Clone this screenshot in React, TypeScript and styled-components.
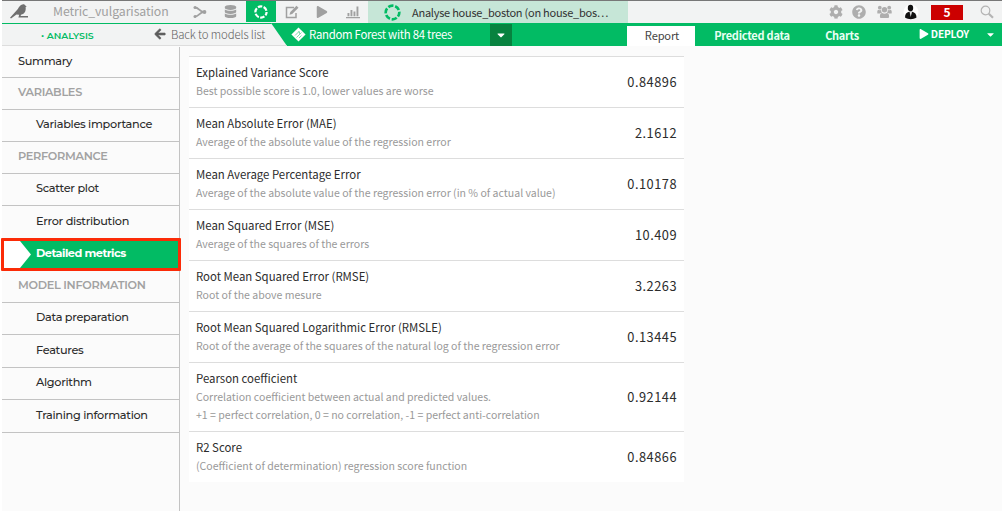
import React from "react";
import styled, { createGlobalStyle, css } from "styled-components";
import { FaArrowLeft, FaCaretDown, FaCog, FaDatabase, FaPlay, FaQuestionCircle } from "react-icons/fa";

const green = "#02bb64";
const sans = '"Source Sans Pro", "Noto Sans CJK SC", sans-serif';
const geometric = 'Montserrat, Inter, sans-serif';

const GlobalStyle = createGlobalStyle`
  * { box-sizing: border-box; }
  body { margin: 0; background: #fff; font-family: ${sans}; overflow: hidden; }
  svg { display: block; flex: none; }
`;

const Page = styled.div`
  display: flex;
  flex-direction: column;
  width: 1002px;
  height: 511px;
  padding-left: 2px;
  background: #fff;
`;

const TopBar = styled.header`
  display: flex;
  height: 23px;
  flex: none;
  border-top: 1px solid #777;
  background: #f2f3f3;
  color: #a0a0a0;
`;

const Slot = styled.div<{ $w: number; $bg?: string }>`
  display: flex;
  align-items: center;
  justify-content: center;
  flex: none;
  width: ${(p) => p.$w}px;
  height: 21px;
  background: ${(p) => p.$bg ?? "transparent"};
`;

const Label = styled.span<{ $size: number; $spacing?: number; $color?: string; $weight?: number; $line?: number }>`
  display: block;
  font-size: ${(p) => p.$size}px;
  letter-spacing: ${(p) => p.$spacing ?? 0}px;
  color: ${(p) => p.$color ?? "inherit"};
  font-weight: ${(p) => p.$weight ?? 400};
  line-height: ${(p) => p.$line ?? 20}px;
  white-space: nowrap;
`;

const ProjectName = styled.div`
  width: 149px;
  padding-left: 17px;
  flex: none;
`;

const OpenTab = styled.div`
  display: flex;
  align-items: center;
  gap: 11px;
  width: 260px;
  height: 22px;
  flex: none;
  padding-left: 16px;
  background: #c6e6d7;
  color: #333;
`;

const Tools = styled.div`
  display: flex;
  align-items: center;
  margin: 0 7px 0 auto;
  height: 21px;
  color: #aeaeae;
`;

const Alerts = styled.div`
  width: 32px;
  height: 15px;
  margin: 2px 16px 0 6px;
  background: #cc0000;
  color: #fff;
  text-align: center;
  font-size: 12px;
  font-weight: 700;
  line-height: 14px;
`;

const SubBar = styled.nav`
  display: flex;
  height: 23px;
  flex: none;
  background: ${green};
  color: #fff;
`;

const Crumbs = styled.div`
  display: flex;
  width: 285px;
  height: 23px;
  flex: none;
  border-top: 1px solid ${green};
  border-bottom: 1px solid #ddd;
  background: #f2f3f3;
  clip-path: polygon(0 0, 269px 0, 285px 100%, 0 100%);
`;

const Section = styled.div`
  width: 152px;
  padding-left: 39px;
  font-family: ${geometric};
  color: ${green};
`;

const BackLink = styled.a`
  display: flex;
  gap: 5px;
  color: #5c5c5c;
  svg { margin-top: 4px; stroke: #666; stroke-width: 30px; }
`;

const ModelName = styled.div`
  display: flex;
  width: 203px;
  flex: none;
  padding-left: 4px;
  gap: 3px;
  svg { margin-top: 4px; }
`;

const ModelMenu = styled.button`
  display: flex;
  align-items: center;
  justify-content: center;
  width: 22px;
  height: 22px;
  margin: 1px 115px 0 0;
  flex: none;
  padding: 0;
  border: 0;
  background: #07823f;
  color: #fff;
`;

const Tab = styled.a<{ $w: number; $active?: boolean }>`
  width: ${(p) => p.$w}px;
  height: 20px;
  margin-top: 3px;
  flex: none;
  text-align: center;
  color: #e8fff3;
  ${(p) => p.$active && css`
    padding-left: 2px;
    background: #fff;
    color: #444;
  `}
`;

const Deploy = styled.div`
  display: flex;
  align-items: center;
  gap: 2px;
  height: 22px;
  margin: 0 6px 0 auto;
  svg:last-child { margin-left: 14px; }
`;

const Main = styled.main`
  display: flex;
  flex: 1;
  background: #fbfbfb;
`;

const Sidebar = styled.aside`
  display: flex;
  flex-direction: column;
  width: 178px;
  flex: none;
  margin-top: 1px;
  border-right: 1px solid #c3c3c3;
  font-family: ${geometric};
`;

const Item = styled.div<{ $h: number; $kind: "top" | "head" | "sub" }>`
  height: ${(p) => p.$h}px;
  flex: none;
  padding-left: ${(p) => (p.$kind === "sub" ? 34 : 16)}px;
  border-bottom: 1px solid #c3c3c3;
  line-height: ${(p) => (p.$h === 33 ? 31 : 29)}px;
  font-size: 11.3px;
  letter-spacing: -0.3px;
  font-weight: ${(p) => (p.$kind === "head" ? 600 : 500)};
  color: ${(p) => (p.$kind === "head" ? "#a2a2a2" : "#2c2c2c")};
  white-space: nowrap;
`;

const ActiveItem = styled.div`
  position: relative;
  height: 33px;
  width: 180px;
  flex: none;
  margin: -1px 0 0 -1px;
  padding-left: 32px;
  border: 3px solid #fb2b07;
  border-radius: 1px;
  background: ${green};
  color: #fff;
  font-size: 11.3px;
  letter-spacing: -0.52px;
  font-weight: 700;
  line-height: 25px;
  white-space: nowrap;
  &::before {
    content: "";
    position: absolute;
    left: 0;
    top: 0;
    width: 27px;
    height: 27px;
    background: #fff;
    clip-path: polygon(0 0, 16px 0, 27px 50%, 16px 100%, 0 100%);
  }
`;

const Metrics = styled.section`
  width: 495px;
  margin: 10px 0 0 9px;
`;

const Metric = styled.div`
  display: flex;
  align-items: center;
  justify-content: space-between;
  padding: 6px 7px 7px 7px;
  border-top: 1px solid #ddd;
  background: #fff;
`;

const MetricText = styled.div`
  display: flex;
  flex-direction: column;
`;

const MetricName = styled.div`
  margin-bottom: 1px;
`;

const MetricValue = styled.div`
  margin-top: 1px;
`;

const Ring = ({ size, color }: { size: number; color: string }) => (
  <svg width={size} height={size} viewBox="0 0 16 16" fill="none" stroke={color} strokeWidth="2.5">
    <circle cx="8" cy="8" r="6.4" strokeDasharray="5.1 1.6" strokeDashoffset="1" />
  </svg>
);

const Bird = () => (
  <svg width="19" height="16" viewBox="0 0 19 16" fill="#6f6f6f">
    <path d="M0 13.800 7.200 5.800C8.600 4 9.600 1 12.600.4c1.500-.2 2.500.4 2.900 1.300l1.300.7-1.200.7c.6 3.600-.6 6.900-4.600 7.700l-.4 1.300h7.400v1.300H8.400l.8-2.600-2.700-.2L1 14.600Z" />
  </svg>
);

const Flow = () => (
  <svg width="14" height="14" viewBox="0 0 14 14" fill="none" stroke="#a0a0a0" strokeWidth="1.8">
    <path d="M2 2.500c4 0 4.500 4.500 9 4.500M2 11.500C6 11.500 6.500 7 11 7" />
    <g fill="#a0a0a0" stroke="none"><circle cx="2" cy="2.500" r="1.500" /><circle cx="2" cy="11.500" r="1.500" /><circle cx="11.500" cy="7" r="1.900" /></g>
  </svg>
);

const Edit = () => (
  <svg width="14" height="14" viewBox="0 0 14 14" fill="none" stroke="#a0a0a0" strokeWidth="1.5">
    <path d="M9 2.500H1.500v10h9.500V8" />
    <path d="M4.500 9.800 5.300 7 11.500.8l2 2L7.200 9Z" fill="#a0a0a0" stroke="none" />
  </svg>
);

const Bars = () => (
  <svg width="14" height="14" viewBox="0 0 14 14" fill="#a0a0a0">
    <path d="M0 12h14v1.300H0zM1.500 8h1.900v3.200H1.500zM4.500 5h1.900v6.200H4.500zM7.500 6.500h1.900v4.700H7.500zM10.500 1.500h1.900v9.700h-1.900z" />
  </svg>
);

const People = () => (
  <svg width="15" height="14" viewBox="0 0 15 14" fill="#aeaeae">
    <circle cx="2.800" cy="2.700" r="1.900" />
    <circle cx="12.200" cy="2.700" r="1.900" />
    <circle cx="7.500" cy="4.800" r="2.700" />
    <path d="M.3 8.300V6.500C.3 5.300 1 4.900 2 4.900c.8.400 1.500.4 2.100.2 0 1.200.3 2 .9 2.700-.9 0-1.500.2-2 .8H1C.6 8.600.3 8.500.3 8.300ZM14.700 8.300V6.500c0-1.200-.7-1.600-1.700-1.600-.8.400-1.500.4-2.100.2 0 1.200-.3 2-.9 2.700.9 0 1.500.2 2 .8h2c.4 0 .7-.1.700-.3Z" />
    <path d="M2.900 11.500c0-2 .7-3.500 2.300-3.500 1.400 1 3.200 1 4.600 0 1.600 0 2.300 1.500 2.300 3.500 0 1-.6 1.500-1.500 1.500H4.400c-.9 0-1.500-.5-1.500-1.500Z" />
  </svg>
);

const Avatar = () => (
  <svg width="16" height="16" viewBox="0 0 16 16">
    <circle cx="8" cy="8" r="7.500" fill="#fff" />
    <ellipse cx="7.500" cy="4" rx="2.700" ry="3.300" fill="#111" />
    <path d="M2 13.500c0-3.500 1.500-5 4-5.700h3.200c2.500.7 4.300 2.200 4.300 5.700-3.500 2.300-8 2.300-11.500 0Z" fill="#111" />
    <path d="m6.600 8 1.100 5L9 8Z" fill="#ddd" />
  </svg>
);

const Search = () => (
  <svg width="14" height="14" viewBox="0 0 14 14" fill="none" stroke="#b4b4b4">
    <circle cx="5.500" cy="5.500" r="4.300" strokeWidth="1.200" />
    <path d="m8.800 8.800 4.200 4" strokeWidth="2.200" />
  </svg>
);

const Diamond = () => (
  <svg width="15" height="15" viewBox="0 0 15 15">
    <path d="M7.500.4 14.600 7.500 7.500 14.600.4 7.500Z" fill="#fff" />
    <path d="m4 8.500 4-4M5.500 10.500l5-5M7 4.800h1.500v2M8 11l2.500-2.500" stroke="#7fdcaf" fill="none" />
  </svg>
);

type Entry = [string, number, "top" | "head" | "sub"];
const before: Entry[] = [
  ["Summary", 31, "top"],
  ["VARIABLES", 32, "head"],
  ["Variables importance", 32, "sub"],
  ["PERFORMANCE", 32, "head"],
  ["Scatter plot", 32, "sub"],
  ["Error distribution", 33, "sub"],
];
const after: Entry[] = [
  ["MODEL INFORMATION", 32, "head"],
  ["Data preparation", 32, "sub"],
  ["Features", 33, "sub"],
  ["Algorithm", 32, "sub"],
  ["Training information", 33, "sub"],
];

const metrics: { name: string; lines: string[]; value: string }[] = [
  { name: "Explained Variance Score", lines: ["Best possible score is 1.0, lower values are worse"], value: "0.84896" },
  { name: "Mean Absolute Error (MAE)", lines: ["Average of the absolute value of the regression error"], value: "2.1612" },
  { name: "Mean Average Percentage Error", lines: ["Average of the absolute value of the regression error (in % of actual value)"], value: "0.10178" },
  { name: "Mean Squared Error (MSE)", lines: ["Average of the squares of the errors"], value: "10.409" },
  { name: "Root Mean Squared Error (RMSE)", lines: ["Root of the above mesure"], value: "3.2263" },
  { name: "Root Mean Squared Logarithmic Error (RMSLE)", lines: ["Root of the average of the squares of the natural log of the regression error"], value: "0.13445" },
  {
    name: "Pearson coefficient",
    lines: ["Correlation coefficient between actual and predicted values.", "+1 = perfect correlation, 0 = no correlation, -1 = perfect anti-correlation"],
    value: "0.92144",
  },
  { name: "R2 Score", lines: ["(Coefficient of determination) regression score function"], value: "0.84866" },
];

export default function App() {
  return (
    <Page>
      <GlobalStyle />
      <TopBar>
        <Slot $w={34}><Bird /></Slot>
        <ProjectName><Label $size={12.3} $spacing={-0.08} $line={20}>Metric_vulgarisation</Label></ProjectName>
        <Slot $w={30}><Flow /></Slot>
        <Slot $w={31}><FaDatabase size={13} /></Slot>
        <Slot $w={30} $bg={green}><Ring size={14} color="#fff" /></Slot>
        <Slot $w={31}><Edit /></Slot>
        <Slot $w={30}><FaPlay size={12} /></Slot>
        <Slot $w={31}><Bars /></Slot>
        <OpenTab>
          <Ring size={17} color={green} />
          <Label $size={11} $spacing={-0.25}>Analyse house_boston (on house_bos…</Label>
        </OpenTab>
        <Tools>
          <Slot $w={22}><FaCog size={14} /></Slot>
          <Slot $w={24}><FaQuestionCircle size={14} /></Slot>
          <Slot $w={26}><People /></Slot>
          <Slot $w={28}><Avatar /></Slot>
          <Alerts>5</Alerts>
          <Slot $w={16}><Search /></Slot>
        </Tools>
      </TopBar>
      <SubBar>
        <Crumbs>
          <Section><Label $size={9.3} $weight={600} $line={23}>• ANALYSIS</Label></Section>
          <BackLink><FaArrowLeft size={12} /><Label $size={11.4} $spacing={-0.12} $weight={300}>Back to models list</Label></BackLink>
        </Crumbs>
        <ModelName><Diamond /><Label $size={11.4} $spacing={-0.29} $line={22}>Random Forest with 84 trees</Label></ModelName>
        <ModelMenu><FaCaretDown size={12} /></ModelMenu>
        <Tab $w={68} $active><Label $size={11.1} $spacing={-0.15} $line={18}>Report</Label></Tab>
        <Tab $w={114}><Label $size={11} $spacing={-0.25} $weight={700} $line={18}>Predicted data</Label></Tab>
        <Tab $w={66}><Label $size={11} $spacing={-0.3} $weight={700} $line={18}>Charts</Label></Tab>
        <Deploy>
          <FaPlay size={10} />
          <Label $size={10.2} $spacing={-0.2} $weight={700}>DEPLOY</Label>
          <FaCaretDown size={11} />
        </Deploy>
      </SubBar>
      <Main>
        <Sidebar>
          {before.map(([text, h, kind]) => <Item key={text} $h={h} $kind={kind}>{text}</Item>)}
          <ActiveItem>Detailed metrics</ActiveItem>
          {after.map(([text, h, kind]) => <Item key={text} $h={h} $kind={kind}>{text}</Item>)}
        </Sidebar>
        <Metrics>
          {metrics.map((m) => (
            <Metric key={m.name}>
              <MetricText>
                <MetricName><Label $size={11.4} $color="#2c2c2c" $line={18}>{m.name}</Label></MetricName>
                {m.lines.map((line) => <Label key={line} $size={10.55} $color="#999" $line={18}>{line}</Label>)}
              </MetricText>
              <MetricValue><Label $size={12.8} $spacing={0.5} $color="#2c2c2c">{m.value}</Label></MetricValue>
            </Metric>
          ))}
        </Metrics>
      </Main>
    </Page>
  );
}
